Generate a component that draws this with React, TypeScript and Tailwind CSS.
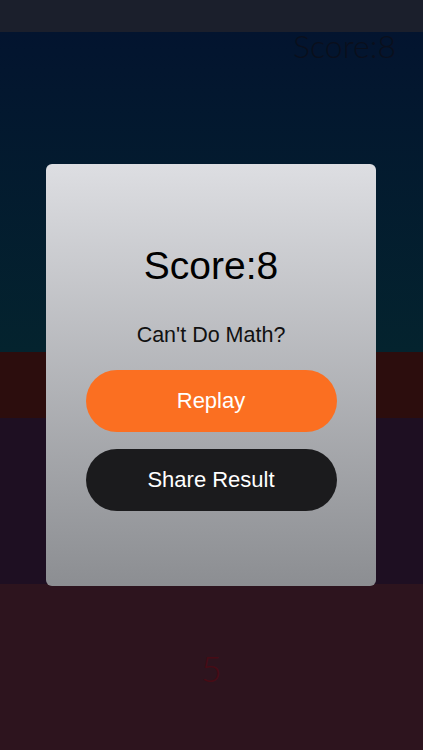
import React from "react";

export default function App() {
  return (
    <div className="relative w-[423px] h-[750px] overflow-hidden" style={{ fontFamily: '"Liberation Sans", Arial, sans-serif' }}>
      <div className="flex flex-col h-full">
        <div className="h-[32px] bg-[#1b1f2c]" />
        <div className="h-[320px] bg-gradient-to-b from-[#03142f] to-[#04232e] flex justify-end items-start pr-[27px]">
          <div className="text-[32px] leading-none -mt-[2px] text-[#0a0f1c] font-light" style={{ fontFamily: 'Lato, "Noto Sans", sans-serif' }}>Score:8</div>
        </div>
        <div className="h-[66px] bg-[#2c0d0d]" />
        <div className="h-[166px] bg-[#1e0f22]" />
        <div className="flex-1 bg-[#2d141e] flex justify-center pt-[66px]">
          <div className="text-[36px] leading-none text-[#470b15] font-light" style={{ fontFamily: 'Lato, "Noto Sans", sans-serif' }}>5</div>
        </div>
      </div>
      <div className="absolute left-[46px] top-[164px] w-[330px] h-[422px] rounded-[6px] bg-gradient-to-b from-[#dddee2] to-[#8c8e92] flex flex-col items-center">
        <div className="mt-[82px] text-[39px] leading-none text-black">Score:8</div>
        <div className="mt-[40px] text-[21.5px] leading-none text-[#111]">Can't Do Math?</div>
        <div className="mt-[23px] w-[251px] h-[62px] rounded-full bg-[#fb6f21] flex items-center justify-center text-white text-[22px]">Replay</div>
        <div className="mt-[17px] w-[251px] h-[62px] rounded-full bg-[#1b1b1d] flex items-center justify-center text-white text-[22px]">Share Result</div>
      </div>
    </div>
  );
}
